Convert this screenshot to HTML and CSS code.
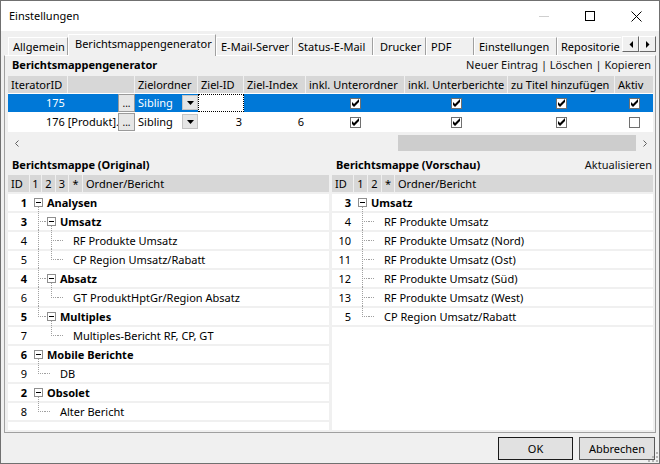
FILE: index.html
```html
<!DOCTYPE html>
<html lang="de">
<head>
<meta charset="utf-8">
<title>Einstellungen</title>
<link rel="stylesheet" href="styles.css">
</head>
<body>
<div class="window">
  <header class="titlebar">
    <span class="title">Einstellungen</span>
    <div class="caption-buttons">
      <span class="cap"><svg width="10" height="1" viewBox="0 0 10 1"><rect width="10" height="1" fill="#cfcfcf"/></svg></span>
      <span class="cap"><svg width="10" height="10" viewBox="0 0 10 10"><rect x="0.5" y="0.5" width="9" height="9" fill="none" stroke="#000"/></svg></span>
      <span class="cap"><svg width="11" height="11" viewBox="0 0 11 11"><path d="M0.5 0.5L10.5 10.5M10.5 0.5L0.5 10.5" stroke="#000" stroke-width="1"/></svg></span>
    </div>
  </header>

  <nav class="tabstrip">
    <div class="tabs">
      <div class="tab t1">Allgemein</div>
      <div class="tab t2 active">Berichtsmappengenerator</div>
      <div class="tab t3">E-Mail-Server</div>
      <div class="tab t4">Status-E-Mail</div>
      <div class="tab t5">Drucker</div>
      <div class="tab t6">PDF</div>
      <div class="tab t7">Einstellungen</div>
      <div class="tab t8">Repositorie</div>
    </div>
    <div class="tabscroll">
      <span class="tsb"><svg width="4" height="7" viewBox="0 0 4 7"><path d="M4 0V7L0.5 3.5Z" fill="#000"/></svg></span>
      <span class="tsb"><svg width="4" height="7" viewBox="0 0 4 7"><path d="M0 0V7L3.5 3.5Z" fill="#000"/></svg></span>
    </div>
  </nav>

  <main class="panel">
    <div class="sechead">
      <span class="sectitle">Berichtsmappengenerator</span>
      <span class="links">Neuer Eintrag | Löschen | Kopieren</span>
    </div>

    <div class="grid">
      <div class="grow ghead">
        <div class="gh">IteratorID</div>
        <div class="gh"></div>
        <div class="gh">Zielordner</div>
        <div class="gh">Ziel-ID</div>
        <div class="gh">Ziel-Index</div>
        <div class="gh">inkl. Unterordner</div>
        <div class="gh">inkl. Unterberichte</div>
        <div class="gh">zu Titel hinzufügen</div>
        <div class="gh last">Aktiv</div>
      </div>

      <div class="grow drow selected">
        <div class="c-iter"><span class="itext">175</span><span class="ell">...</span></div>
        <div class="c-ziel"><span class="ztext">Sibling</span><span class="dd"><svg width="7" height="4" viewBox="0 0 7 4"><path d="M0 0H7L3.5 4Z" fill="#000"/></svg></span></div>
        <div class="c-num focus"></div>
        <div class="c-num"></div>
        <div class="c-chk"><svg class="cb" width="11" height="11" viewBox="0 0 11 11"><rect x="0.5" y="0.5" width="10" height="10" fill="#fff" stroke="#707070"/><path d="M2 4v3l2 2 5-5V1L4 6z" fill="#000"/></svg></div>
        <div class="c-chk"><svg class="cb" width="11" height="11" viewBox="0 0 11 11"><rect x="0.5" y="0.5" width="10" height="10" fill="#fff" stroke="#707070"/><path d="M2 4v3l2 2 5-5V1L4 6z" fill="#000"/></svg></div>
        <div class="c-chk"><svg class="cb" width="11" height="11" viewBox="0 0 11 11"><rect x="0.5" y="0.5" width="10" height="10" fill="#fff" stroke="#707070"/><path d="M2 4v3l2 2 5-5V1L4 6z" fill="#000"/></svg></div>
        <div class="c-chk"><svg class="cb" width="11" height="11" viewBox="0 0 11 11"><rect x="0.5" y="0.5" width="10" height="10" fill="#fff" stroke="#707070"/><path d="M2 4v3l2 2 5-5V1L4 6z" fill="#000"/></svg></div>
      </div>

      <div class="grow drow">
        <div class="c-iter"><span class="itext">176 [Produkt].</span><span class="ell">...</span></div>
        <div class="c-ziel"><span class="ztext">Sibling</span><span class="dd"><svg width="7" height="4" viewBox="0 0 7 4"><path d="M0 0H7L3.5 4Z" fill="#000"/></svg></span></div>
        <div class="c-num">3</div>
        <div class="c-num">6</div>
        <div class="c-chk"><svg class="cb" width="11" height="11" viewBox="0 0 11 11"><rect x="0.5" y="0.5" width="10" height="10" fill="#fff" stroke="#707070"/><path d="M2 4v3l2 2 5-5V1L4 6z" fill="#000"/></svg></div>
        <div class="c-chk"><svg class="cb" width="11" height="11" viewBox="0 0 11 11"><rect x="0.5" y="0.5" width="10" height="10" fill="#fff" stroke="#707070"/><path d="M2 4v3l2 2 5-5V1L4 6z" fill="#000"/></svg></div>
        <div class="c-chk"><svg class="cb" width="11" height="11" viewBox="0 0 11 11"><rect x="0.5" y="0.5" width="10" height="10" fill="#fff" stroke="#707070"/><path d="M2 4v3l2 2 5-5V1L4 6z" fill="#000"/></svg></div>
        <div class="c-chk"><svg class="cb" width="11" height="11" viewBox="0 0 11 11"><rect x="0.5" y="0.5" width="10" height="10" fill="#fff" stroke="#707070"/></svg></div>
      </div>

      <div class="hscroll">
        <span class="sarrow"><svg width="4" height="7" viewBox="0 0 4 7"><polyline points="3.5,0.5 0.5,3.5 3.5,6.5" fill="none" stroke="#606060"/></svg></span>
        <div class="track"><div class="thumb"></div></div>
        <span class="sarrow"><svg width="4" height="7" viewBox="0 0 4 7"><polyline points="0.5,0.5 3.5,3.5 0.5,6.5" fill="none" stroke="#606060"/></svg></span>
      </div>
    </div>

    <div class="sec2">
      <div class="sechead half"><span class="sectitle">Berichtsmappe (Original)</span></div>
      <div class="sechead half"><span class="sectitle">Berichtsmappe (Vorschau)</span><span class="links">Aktualisieren</span></div>
    </div>

    <div class="trees">
      <section class="tree">
        <div class="thead">
          <span class="th w-id">ID</span><span class="th n w11">1</span><span class="th n w13">2</span><span class="th n w12">3</span><span class="th n w13">*</span><span class="th grow1">Ordner/Bericht</span>
        </div>
        <div class="trow"><span class="tid b">1</span><span class="g g-down"><i class="box"></i></span><span class="lbl b">Analysen</span></div>
        <div class="trow"><span class="tid b">3</span><span class="g g-tee"></span><span class="g g-in-down"><i class="box"></i></span><span class="lbl b">Umsatz</span></div>
        <div class="trow"><span class="tid">4</span><span class="g g-pipe"></span><span class="g g-tee"></span><span class="g g-stub"></span><span class="lbl">RF Produkte Umsatz</span></div>
        <div class="trow"><span class="tid">5</span><span class="g g-pipe"></span><span class="g g-elbow"></span><span class="g g-stub"></span><span class="lbl">CP Region Umsatz/Rabatt</span></div>
        <div class="trow"><span class="tid b">4</span><span class="g g-tee"></span><span class="g g-in-down"><i class="box"></i></span><span class="lbl b">Absatz</span></div>
        <div class="trow"><span class="tid">6</span><span class="g g-pipe"></span><span class="g g-elbow"></span><span class="g g-stub"></span><span class="lbl">GT ProduktHptGr/Region Absatz</span></div>
        <div class="trow"><span class="tid b">5</span><span class="g g-elbow"></span><span class="g g-in-down"><i class="box"></i></span><span class="lbl b">Multiples</span></div>
        <div class="trow"><span class="tid">7</span><span class="g"></span><span class="g g-elbow"></span><span class="g g-stub"></span><span class="lbl">Multiples-Bericht RF, CP, GT</span></div>
        <div class="trow"><span class="tid b">6</span><span class="g g-down"><i class="box"></i></span><span class="lbl b">Mobile Berichte</span></div>
        <div class="trow"><span class="tid">9</span><span class="g g-elbow"></span><span class="g g-stub"></span><span class="lbl">DB</span></div>
        <div class="trow"><span class="tid b">2</span><span class="g g-down"><i class="box"></i></span><span class="lbl b">Obsolet</span></div>
        <div class="trow"><span class="tid">8</span><span class="g g-elbow"></span><span class="g g-stub"></span><span class="lbl">Alter Bericht</span></div>
        <div class="tend"></div>
      </section>

      <section class="tree">
        <div class="thead">
          <span class="th w-id">ID</span><span class="th n w13">1</span><span class="th n w13">2</span><span class="th n w12">*</span><span class="th grow1">Ordner/Bericht</span>
        </div>
        <div class="trow"><span class="tid b">3</span><span class="g g-down"><i class="box"></i></span><span class="lbl b">Umsatz</span></div>
        <div class="trow"><span class="tid">4</span><span class="g g-tee"></span><span class="g g-stub"></span><span class="lbl">RF Produkte Umsatz</span></div>
        <div class="trow"><span class="tid">10</span><span class="g g-tee"></span><span class="g g-stub"></span><span class="lbl">RF Produkte Umsatz (Nord)</span></div>
        <div class="trow"><span class="tid">11</span><span class="g g-tee"></span><span class="g g-stub"></span><span class="lbl">RF Produkte Umsatz (Ost)</span></div>
        <div class="trow"><span class="tid">12</span><span class="g g-tee"></span><span class="g g-stub"></span><span class="lbl">RF Produkte Umsatz (Süd)</span></div>
        <div class="trow"><span class="tid">13</span><span class="g g-tee"></span><span class="g g-stub"></span><span class="lbl">RF Produkte Umsatz (West)</span></div>
        <div class="trow"><span class="tid">5</span><span class="g g-elbow"></span><span class="g g-stub"></span><span class="lbl">CP Region Umsatz/Rabatt</span></div>
        <div class="tend"></div>
      </section>
    </div>
  </main>

  <footer class="footer">
    <button class="btn default">OK</button>
    <button class="btn wide">Abbrechen</button>
  </footer>

  <svg class="grip" width="11" height="11" viewBox="0 0 11 11">
    <rect x="9" y="1" width="2" height="2" fill="#b4b4b4"/>
    <rect x="9" y="5" width="2" height="2" fill="#b4b4b4"/>
    <rect x="5" y="5" width="2" height="2" fill="#b4b4b4"/>
    <rect x="9" y="9" width="2" height="2" fill="#b4b4b4"/>
    <rect x="5" y="9" width="2" height="2" fill="#b4b4b4"/>
    <rect x="1" y="9" width="2" height="2" fill="#b4b4b4"/>
  </svg>
</div>
</body>
</html>
```

FILE: styles.css
```css
* { box-sizing: border-box; }
html, body { margin: 0; padding: 0; }
body {
  width: 660px;
  height: 464px;
  overflow: hidden;
  background: #f0f0f0;
  font-family: "Noto Sans", "Open Sans", "DejaVu Sans", sans-serif;
  font-size: 11px;
  color: #000;
}

.window {
  position: relative;
  width: 660px;
  height: 464px;
  border: 1px solid #707070;
  background: #f0f0f0;
  display: flex;
  flex-direction: column;
}

/* title bar */
.titlebar {
  flex: none;
  height: 30px;
  background: #fff;
  display: flex;
}
.title {
  flex: 1;
  padding-left: 8px;
  line-height: 29px;
}
.caption-buttons { display: flex; }
.cap {
  width: 46px;
  display: flex;
  align-items: center;
  justify-content: center;
}

/* tabs */
.tabstrip {
  flex: none;
  height: 24px;
  display: flex;
  align-items: flex-end;
  padding: 0 3px 0 7px;
  position: relative;
  z-index: 1;
}
.tabs {
  flex: 1;
  display: flex;
  align-items: flex-end;
  min-width: 0;
}
.tab {
  flex: none;
  height: 18px;
  line-height: 16px;
  padding: 1px 0 0 4px;
  white-space: nowrap;
  background: #f0f0f0;
  border-top: 1px solid #fff;
  border-left: 1px solid #fff;
  border-right: 1px solid #a0a0a0;
}
.tab.active {
  height: 22px;
  margin-bottom: -1px;
  padding-left: 6px;
}
.t1 { width: 60px; }
.t2 { width: 148px; }
.t3 { width: 77px; }
.t4 { width: 80px; }
.t5 { width: 53px; padding-left: 6px; }
.t6 { width: 48px; }
.t7 { width: 83px; }
.t8 { width: 64px; padding-left: 3px; border-right: none; }

.tabscroll {
  flex: none;
  display: flex;
  margin-bottom: 3px;
}
.tsb {
  width: 17px;
  height: 16px;
  display: flex;
  align-items: center;
  justify-content: center;
  background: #f0f0f0;
  border: 1px solid;
  border-color: #fff #696969 #696969 #fff;
}

/* tab panel */
.panel {
  flex: none;
  height: 378px;
  margin: 0 3px;
  border: 1px solid #a0a0a0;
  border-top-color: #fff;
  padding: 0 2px 0 3px;
  display: flex;
  flex-direction: column;
}

.sechead {
  flex: none;
  height: 16px;
  display: flex;
  justify-content: space-between;
  align-items: center;
  padding: 0 2px 0 4px;
  margin-bottom: 4px;
  white-space: nowrap;
}
.sectitle { font-weight: 700; }
.links { color: #111; }

/* grid */
.grid {
  flex: none;
  display: flex;
  flex-direction: column;
  background: #fff;
}
.grow {
  display: grid;
  grid-template-columns: 60px 67px 63px 46px 62px 99px 103px 107px 38px;
}
.ghead {
  height: 17px;
  margin-bottom: 1px;
  background: #f0f0f0;
}
.gh {
  background: #d7d7d7;
  border-right: 1px solid #f0f0f0;
  line-height: 17px;
  padding-left: 3px;
  white-space: nowrap;
}
.gh.last { border-right: none; }

.drow {
  height: 18px;
  margin-bottom: 1px;
  background: #fff;
}
.drow > div { line-height: 18px; white-space: nowrap; }
.selected > div { background: #0078d7; color: #fff; }
.selected > .focus {
  background: #fff;
  border: 1px dotted #000;
}

.c-iter {
  grid-column: span 2;
  display: flex;
  min-width: 0;
}
.itext {
  flex: 1;
  min-width: 0;
  padding-left: 38px;
  white-space: nowrap;
}
.ell {
  flex: none;
  width: 17px;
  height: 18px;
  background: #e6e6e6;
  border: 1px solid #9a9a9a;
  color: #000;
  text-align: center;
  line-height: 16px;
  font-size: 10px;
}
.c-ziel { display: flex; }
.ztext { flex: 1; padding-left: 3px; }
.dd {
  flex: none;
  width: 16px;
  height: 15px;
  margin-top: 1px;
  background: #e5e5e5;
  border: 1px solid #c4c4c4;
  display: flex;
  align-items: center;
  justify-content: center;
}
.c-num { text-align: right; padding-right: 2px; }
.c-chk {
  display: flex;
  align-items: center;
  justify-content: center;
}
.cb { display: block; }

.hscroll {
  height: 20px;
  border-top: 2px solid #f0f0f0;
  background: #f0f0f0;
  display: flex;
}
.sarrow {
  flex: none;
  width: 17px;
  display: flex;
  align-items: center;
  justify-content: center;
}
.track {
  flex: 1;
  display: flex;
  justify-content: flex-end;
}
.thumb {
  width: 238px;
  height: 16px;
  margin-top: 1px;
  background: #cdcdcd;
}

/* section 2 */
.sec2 {
  flex: none;
  display: grid;
  grid-template-columns: 321px 321px;
  column-gap: 3px;
  margin-top: 4px;
  margin-bottom: 3px;
}
.sec2 .sechead { margin-bottom: 0; padding-right: 1px; }

/* trees */
.trees {
  flex: 1;
  display: grid;
  grid-template-columns: 321px 321px;
  column-gap: 3px;
  margin-bottom: 2px;
  min-height: 0;
}
.tree {
  background: #fff;
  display: flex;
  flex-direction: column;
  overflow: hidden;
}
.thead {
  flex: none;
  height: 17px;
  display: flex;
  gap: 1px;
  background: #f0f0f0;
}
.th {
  background: #d7d7d7;
  line-height: 17px;
  padding-left: 3px;
  white-space: nowrap;
}
.th.n { padding-left: 0; text-align: center; }
.w-id { width: 21px; }
.w11 { width: 11px; }
.w12 { width: 12px; }
.w13 { width: 13px; }
.grow1 { flex: 1; }

.trow {
  flex: none;
  height: 19px;
  display: flex;
  background: linear-gradient(#f0f0f0, #f0f0f0) 0 0 / 100% 2px no-repeat, #fff;
}
.tend { flex: none; height: 2px; background: #f0f0f0; }
.tid {
  flex: none;
  width: 24px;
  padding: 2px 5px 0 0;
  line-height: 17px;
  text-align: right;
}
.lbl {
  padding: 2px 0 0 2px;
  line-height: 17px;
  white-space: nowrap;
}
.b { font-weight: 700; }

.g {
  --dv: repeating-linear-gradient(#a0a0a0 0 1px, transparent 1px 2px);
  --dh: repeating-linear-gradient(90deg, #a0a0a0 0 1px, transparent 1px 2px);
  flex: none;
  width: 13px;
  height: 19px;
}
.g-pipe { background: var(--dv) 6px 0 / 1px 19px no-repeat; }
.g-tee {
  background: var(--dv) 6px 0 / 1px 19px no-repeat,
              var(--dh) 6px 10px / 7px 1px no-repeat;
}
.g-elbow {
  background: var(--dv) 6px 0 / 1px 10px no-repeat,
              var(--dh) 6px 10px / 7px 1px no-repeat;
}
.g-stub { background: var(--dh) 0 10px / 5px 1px no-repeat; }
.g-down { background: var(--dv) 6px 15px / 1px 4px no-repeat; }
.g-in-down {
  background: var(--dv) 6px 15px / 1px 4px no-repeat,
              var(--dh) 0 10px / 2px 1px no-repeat;
}
.box {
  display: block;
  width: 9px;
  height: 9px;
  margin: 6px 0 0 2px;
  border: 1px solid #8e8e8e;
  background: linear-gradient(#000, #000) center / 5px 1px no-repeat, #fff;
}

/* footer */
.footer {
  flex: 1;
  display: flex;
  justify-content: flex-end;
  align-items: flex-start;
  gap: 6px;
  padding: 4px 4px 0 0;
}
.btn {
  width: 75px;
  height: 23px;
  margin: 0;
  padding: 0;
  font: inherit;
  color: #000;
  background: #e1e1e1;
  border: 1px solid #5a5a5a;
}
.btn.default { border-color: #1a1a1a; }
.btn.wide { width: 76px; }

.grip {
  position: absolute;
  right: 1px;
  bottom: 1px;
}
```
